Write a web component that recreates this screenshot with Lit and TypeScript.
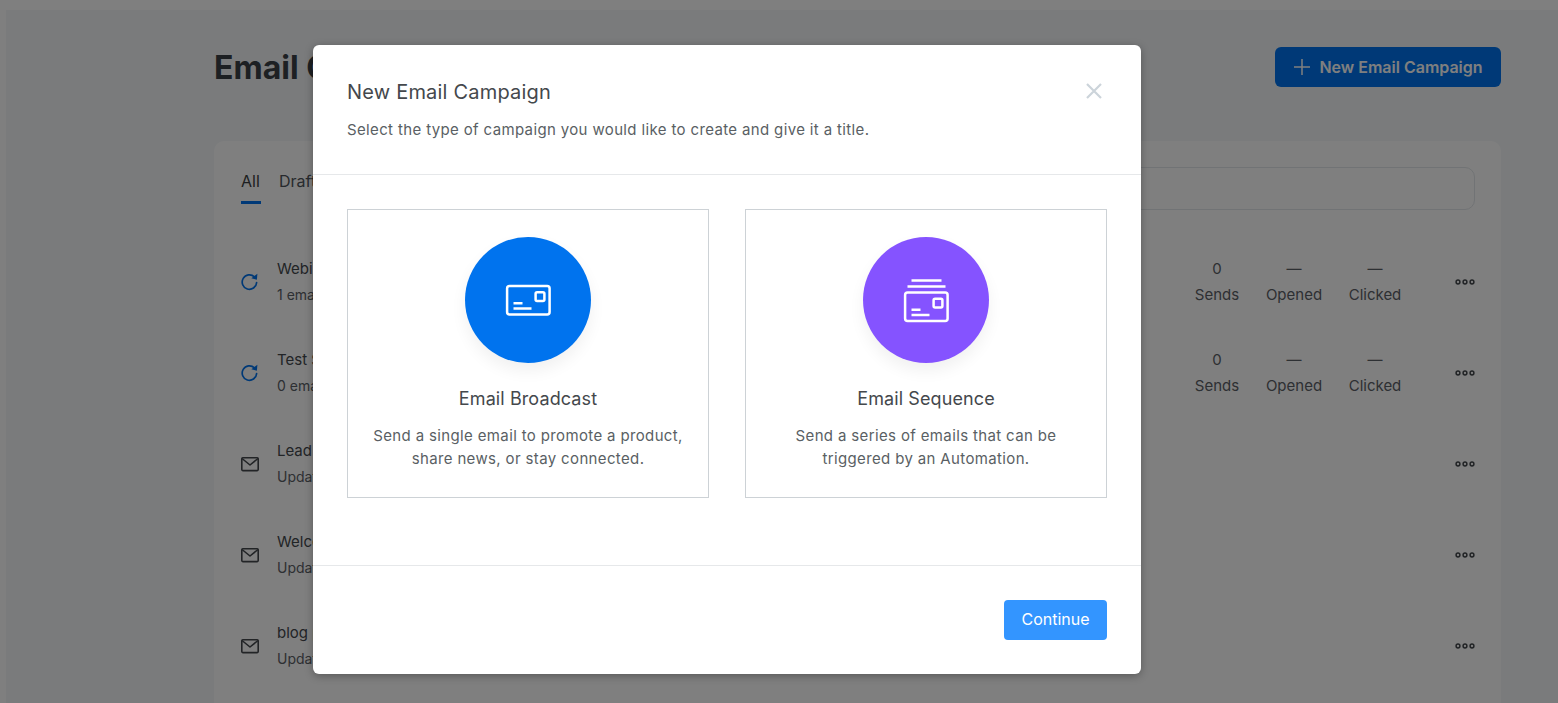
import { LitElement, html, css, svg } from "lit";
import { customElement } from "lit/decorators.js";

const refreshIcon = html`<svg width="20" height="20" viewBox="0 0 20 20" fill="none">
  <path d="M16.6 10.6a7.2 7.2 0 1 1-2.2-5.7" stroke="#0073ee" stroke-width="1.7" stroke-linecap="round"/>
  <path d="M17.4 1.8l-.5 5.9-5.6-1.4z" fill="#0073ee"/>
</svg>`;

const mailIcon = html`<svg width="20" height="16" viewBox="0 0 20 16" fill="none" stroke="#44484d" stroke-width="1.6" stroke-linejoin="round">
  <rect x="1.8" y="1.8" width="16.4" height="12.8" rx="1"/>
  <path d="M2 2.5l8 6.5 8-6.5"/>
</svg>`;

const dots = html`<svg width="20" height="8" viewBox="0 0 20 8" fill="none" stroke="#44484d" stroke-width="1.5">
  <circle cx="3" cy="4" r="1.9"/><circle cx="10" cy="4" r="1.9"/><circle cx="17" cy="4" r="1.9"/>
</svg>`;

const cardGlyph = svg`
  <rect x="1.1" y="1.1" width="42.5" height="28.5" rx="2.5"/>
  <rect x="29.6" y="7.2" width="8.8" height="8.8" rx="1.5"/>
  <path d="M7.5 18.2h9M7.5 23.6h18"/>`;

const rows = [
  { kind: "seq", name: "Webinar Sequence", sub: "1 email", stats: true },
  { kind: "seq", name: "Test Sequence", sub: "0 emails", stats: true },
  { kind: "mail", name: "Lead Magnet", sub: "Updated 2 days ago", stats: false },
  { kind: "mail", name: "Welcome Email", sub: "Updated 5 days ago", stats: false },
  { kind: "mail", name: "blog post", sub: "Updated 9 days ago", stats: false },
];

@customElement("app-root")
export class AppRoot extends LitElement {
  static styles = css`
    :host {
      display: block;
      height: 703px;
      overflow: hidden;
      position: relative;
      font-family: Inter, "Liberation Sans", sans-serif;
      background: #fff;
      color: #2f343a;
    }
    * { box-sizing: border-box; }
    .page {
      margin: 10px 0 0 6px;
      height: 693px;
      background: #f4f7f9;
      padding: 37px 57px 0 208px;
    }
    .top {
      display: flex;
      justify-content: space-between;
      align-items: center;
      height: 40px;
      margin-bottom: 54px;
    }
    h1 {
      margin: 0;
      font-size: 32px;
      font-weight: 700;
      color: #3a4046;
    }
    .new {
      width: 226px;
      height: 40px;
      border-radius: 6px;
      background: #0073ee;
      color: #fff;
      display: flex;
      align-items: center;
      justify-content: center;
      gap: 8px;
      font-size: 16px;
      font-weight: 600;
    }
    .panel {
      background: #fff;
      border-radius: 10px;
      height: 620px;
      padding: 26px 26px 0 27px;
    }
    .tabbar {
      display: flex;
      gap: 18px;
      align-items: flex-start;
      height: 43px;
    }
    .tab {
      font-size: 16px;
      line-height: 29px;
      height: 37px;
      color: #4f555b;
      width: 20px;
    }
    .tab.on {
      color: #3a3e42;
      border-bottom: 3px solid #0073ee;
    }
    .search {
      flex: 1;
      height: 43px;
      margin-left: 700px;
      border: 1px solid #e2e6ea;
      border-radius: 10px;
    }
    .list { margin-top: 26px; }
    .row {
      height: 91px;
      display: grid;
      grid-template-columns: 36px 1fr 64px 90px 72px 64px;
      align-items: center;
    }
    .icon { display: flex; margin-left: -1px; }
    .name { font-size: 15px; line-height: 26px; color: #44484d; }
    .sub { font-size: 14px; line-height: 26px; color: #5b6066; }
    .stat { text-align: center; font-size: 15px; color: #5b6066; line-height: 26px; }
    .stat b { display: block; font-weight: 400; }
    .more { display: flex; justify-content: flex-end; }

    .overlay {
      position: absolute;
      inset: 0;
      background: rgba(0, 0, 0, 0.5);
    }
    .modal {
      position: absolute;
      left: 313px;
      top: 45px;
      width: 828px;
      height: 629px;
      background: #fff;
      border-radius: 6px;
      box-shadow: 0 2px 8px rgba(0, 0, 0, 0.3);
      display: flex;
      flex-direction: column;
    }
    .head {
      height: 130px;
      padding: 34px 34px 0;
      border-bottom: 1px solid #e6e8ea;
      position: relative;
    }
    .head h2 {
      margin: 0;
      font-size: 20px;
      line-height: 26px;
      font-weight: 400;
      letter-spacing: 0.2px;
      color: #44484c;
    }
    .head p {
      margin: 13px 0 0;
      font-size: 15px;
      line-height: 24px;
      letter-spacing: 0.36px;
      color: #5a5f64;
    }
    .close {
      position: absolute;
      right: 39px;
      top: 38px;
      display: flex;
    }
    .body {
      height: 391px;
      padding: 34px 34px 0;
      display: grid;
      grid-template-columns: 362px 362px;
      gap: 36px;
      align-items: start;
      border-bottom: 1px solid #e6e8ea;
    }
    .option {
      height: 289px;
      border: 1px solid #cdd2d6;
      padding-top: 27px;
      display: flex;
      flex-direction: column;
      align-items: center;
      text-align: center;
    }
    .circle {
      width: 126px;
      height: 126px;
      border-radius: 50%;
      display: flex;
      align-items: center;
      justify-content: center;
      box-shadow: 0 8px 16px rgba(0, 0, 0, 0.06);
    }
    .circle.blue { background: #0073ee; }
    .circle.purple { background: #8553ff; }
    .circle svg {
      display: block;
      fill: none;
      stroke: #fff;
      stroke-width: 2.5;
      overflow: visible;
    }
    .option h3 {
      margin: 23px 0 0;
      padding-top: 1px;
      font-size: 18px;
      line-height: 24px;
      font-weight: 400;
      letter-spacing: 0.1px;
      color: #44484c;
    }
    .option p {
      margin: 13px 0 0;
      font-size: 15px;
      line-height: 23px;
      letter-spacing: 0.36px;
      color: #5a5f64;
    }
    .foot {
      flex: 1;
      display: flex;
      justify-content: flex-end;
      align-items: flex-start;
      padding: 34px 34px 0;
    }
    .continue {
      width: 103px;
      height: 40px;
      padding-bottom: 2px;
      background: #3395ff;
      color: #fff;
      border-radius: 4px;
      display: flex;
      align-items: center;
      justify-content: center;
      font-size: 16px;
      font-weight: 400;
    }
  `;

  render() {
    return html`
      <div class="page">
        <div class="top">
          <h1>Email Campaigns</h1>
          <div class="new">
            <svg width="18" height="18" viewBox="0 0 18 18" stroke="#fff" stroke-width="1.5"><path d="M9 1v16M1 9h16"/></svg>
            New Email Campaign
          </div>
        </div>
        <div class="panel">
          <div class="tabbar">
            <div class="tab on">All</div>
            <div class="tab">Drafts</div>
            <div class="search"></div>
          </div>
          <div class="list">
            ${rows.map(
              (r) => html`<div class="row">
                <div class="icon">${r.kind === "seq" ? refreshIcon : mailIcon}</div>
                <div>
                  <div class="name">${r.name}</div>
                  <div class="sub">${r.sub}</div>
                </div>
                ${r.stats
                  ? html`<div class="stat"><b>0</b>Sends</div>
                      <div class="stat"><b>—</b>Opened</div>
                      <div class="stat"><b>—</b>Clicked</div>`
                  : html`<div></div><div></div><div></div>`}
                <div class="more">${dots}</div>
              </div>`
            )}
          </div>
        </div>
      </div>
      <div class="overlay"></div>
      <div class="modal">
        <div class="head">
          <h2>New Email Campaign</h2>
          <p>Select the type of campaign you would like to create and give it a title.</p>
          <div class="close">
            <svg width="16" height="16" viewBox="0 0 16 16" stroke="#ccd4da" stroke-width="2.2"><path d="M1 1l14 14M15 1L1 15"/></svg>
          </div>
        </div>
        <div class="body">
          <div class="option">
            <div class="circle blue">
              <svg width="45" height="31" viewBox="0 0 45 31">${cardGlyph}</svg>
            </div>
            <h3>Email Broadcast</h3>
            <p>Send a single email to promote a product,<br />share news, or stay connected.</p>
          </div>
          <div class="option">
            <div class="circle purple">
              <svg width="45" height="43" viewBox="0 -12.5 45 43">
                ${cardGlyph}
                <path d="M7.5 -11h30M3.5 -5h38"/>
              </svg>
            </div>
            <h3>Email Sequence</h3>
            <p>Send a series of emails that can be<br />triggered by an Automation.</p>
          </div>
        </div>
        <div class="foot"><div class="continue">Continue</div></div>
      </div>
    `;
  }
}
